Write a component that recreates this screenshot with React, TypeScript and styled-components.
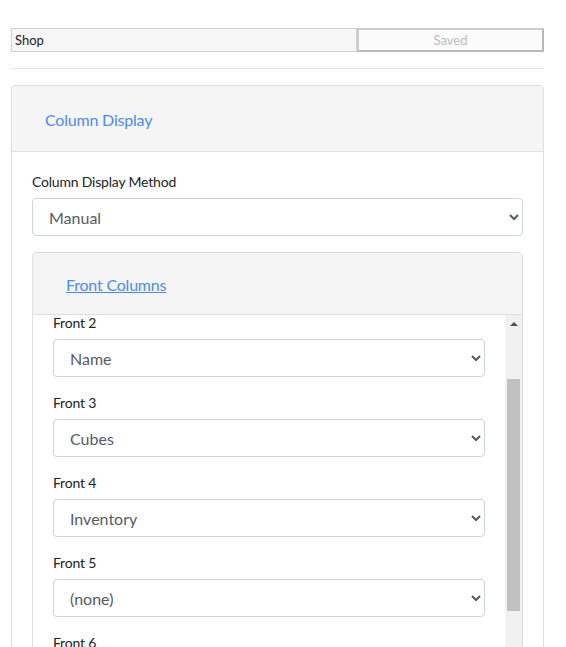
import { useEffect, useRef, useState } from "react";
import styled, { createGlobalStyle } from "styled-components";

const GlobalStyle = createGlobalStyle`
  html, body {
    margin: 0;
    padding: 0;
    background: #ffffff;
    overflow: hidden;
  }
  body {
    font-family: Lato, "Liberation Sans", sans-serif;
    color: #212529;
  }
`;

const Page = styled.div`
  padding: 28px 22px 0 11px;
`;

const TopBar = styled.div`
  display: flex;
  height: 24px;
`;

const NameInput = styled.input`
  flex: 0 0 346px;
  box-sizing: border-box;
  height: 24px;
  margin: 0;
  padding: 0 3px;
  border: 1px solid #cfcfcf;
  background: #f6f6f6;
  font-family: Lato, "Liberation Sans", sans-serif;
  font-size: 13px;
  color: #222;
  outline: none;
`;

const SaveButton = styled.button`
  flex: 1;
  box-sizing: border-box;
  height: 24px;
  margin: 0;
  border: 2px solid #cdcdcd;
  border-bottom-color: #b9b9b9;
  border-right-color: #b9b9b9;
  background: #fbfbfb;
  font-family: Lato, "Liberation Sans", sans-serif;
  font-size: 13px;
  color: #bdbdbd;
`;

const Divider = styled.hr`
  margin: 16px 0 16px;
  border: 0;
  border-top: 1px solid #e6e6e6;
`;

const Card = styled.div`
  border: 1px solid #dedede;
  border-radius: 4px;
  background: #fff;
`;

const CardHeader = styled.div<{ $height: number }>`
  display: flex;
  align-items: center;
  height: ${(p) => p.$height}px;
  padding: 2px 33px 0;
  box-sizing: border-box;
  background: #f5f5f5;
  border-bottom: 1px solid #dedede;
  border-radius: 4px 4px 0 0;
`;

const HeaderLink = styled.a<{ $underline?: boolean }>`
  font-size: 16px;
  letter-spacing: -0.2px;
  color: #4b8bf5;
  text-decoration: ${(p) => (p.$underline ? "underline" : "none")};
  cursor: pointer;
`;

const CardBody = styled.div`
  padding: 20px 20px 0;
`;

const Label = styled.label`
  display: block;
  font-size: 14px;
  letter-spacing: -0.2px;
  line-height: 20px;
  color: #222;
  margin-bottom: 6px;
`;

const Select = styled.select`
  display: block;
  width: 100%;
  box-sizing: border-box;
  height: 38px;
  padding: 0 8px 0 12px;
  border: 1px solid #ced4da;
  border-radius: 4px;
  background: #fff;
  font-family: Lato, "Liberation Sans", sans-serif;
  font-size: 16px;
  color: #555b62;
`;

const Field = styled.div`
  margin-bottom: 16px;

  &:last-child {
    margin-bottom: 0;
  }
`;

const ScrollFrame = styled.div`
  display: flex;
  height: 470px;
`;

const ScrollList = styled.div`
  flex: 1;
  overflow-y: scroll;
  padding: 14px 20px 8px;
  scrollbar-width: none;

  &::-webkit-scrollbar {
    display: none;
  }
`;

const ScrollBar = styled.div`
  display: flex;
  flex-direction: column;
  width: 17px;
  background: #f1f1f1;
`;

const ArrowButton = styled.div<{ $dir: "up" | "down" }>`
  display: flex;
  align-items: center;
  justify-content: center;
  height: 17px;

  &::before {
    content: "";
    border-left: 4px solid transparent;
    border-right: 4px solid transparent;
    ${(p) =>
      p.$dir === "up"
        ? "border-bottom: 4px solid #505050;"
        : "border-top: 4px solid #505050;"}
  }
`;

const Track = styled.div`
  position: relative;
  flex: 1;
`;

const Thumb = styled.div`
  position: absolute;
  left: 2px;
  right: 2px;
  background: #c1c1c1;
`;

const fronts = [
  "Image",
  "Name",
  "Cubes",
  "Inventory",
  "(none)",
  "(none)",
  "(none)",
  "(none)",
  "(none)",
  "(none)",
  "(none)",
];

const options = ["(none)", "Image", "Name", "Cubes", "Inventory", "Price", "Type"];

export default function App() {
  const listRef = useRef<HTMLDivElement>(null);
  const [thumb, setThumb] = useState({ top: 0, height: 0 });

  const updateThumb = () => {
    const el = listRef.current;
    if (!el) return;
    const track = el.clientHeight - 34;
    setThumb({
      top: (track * el.scrollTop) / el.scrollHeight,
      height: (track * el.clientHeight) / el.scrollHeight,
    });
  };

  useEffect(() => {
    if (listRef.current) listRef.current.scrollTop = 96;
    updateThumb();
  }, []);

  return (
    <>
      <GlobalStyle />
      <Page>
        <TopBar>
          <NameInput defaultValue="Shop" />
          <SaveButton disabled>Saved</SaveButton>
        </TopBar>
        <Divider />
        <Card>
          <CardHeader $height={66}>
            <HeaderLink>Column Display</HeaderLink>
          </CardHeader>
          <CardBody>
            <Field>
              <Label>Column Display Method</Label>
              <Select defaultValue="Manual">
                <option>Manual</option>
                <option>Automatic</option>
              </Select>
            </Field>
            <Card>
              <CardHeader $height={62}>
                <HeaderLink $underline>Front Columns</HeaderLink>
              </CardHeader>
              <ScrollFrame>
                <ScrollList ref={listRef} onScroll={updateThumb}>
                  {fronts.map((value, i) => (
                    <Field key={i}>
                      <Label>Front {i + 1}</Label>
                      <Select defaultValue={value}>
                        {options.map((o) => (
                          <option key={o}>{o}</option>
                        ))}
                      </Select>
                    </Field>
                  ))}
                </ScrollList>
                <ScrollBar>
                  <ArrowButton $dir="up" />
                  <Track>
                    <Thumb style={{ top: thumb.top, height: thumb.height }} />
                  </Track>
                  <ArrowButton $dir="down" />
                </ScrollBar>
              </ScrollFrame>
            </Card>
          </CardBody>
        </Card>
      </Page>
    </>
  );
}
